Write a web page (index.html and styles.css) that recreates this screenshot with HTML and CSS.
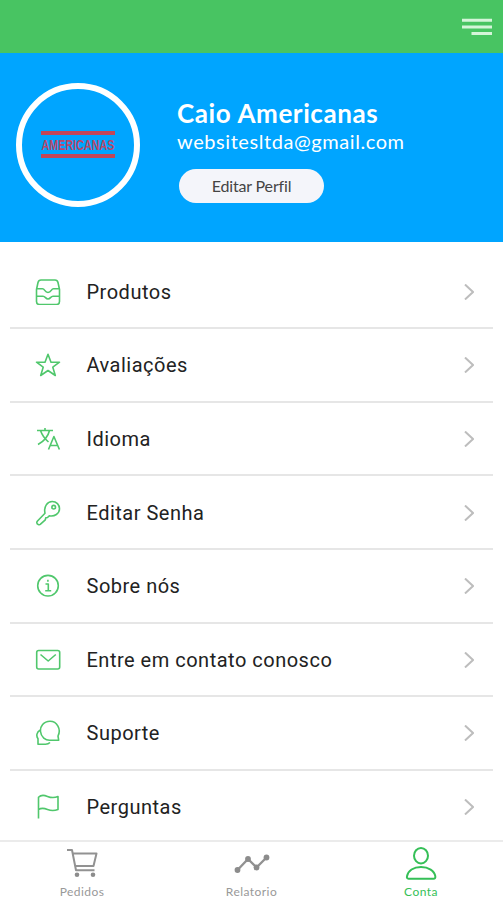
FILE: index.html
```
<!DOCTYPE html>
<html lang="pt-BR">
	<head>
		<meta charset="utf-8">
		<title>Conta</title>
		<link rel="stylesheet" href="styles.css">
	</head>
	<body>
		<div class="topbar">
			<svg class="menu-btn" width="30" height="18" viewBox="0 0 30 18">
				<path d="M0 2.300h30M0 8.900h30M9.500 15.500h20.500"/>
			</svg>
		</div>
		<div class="profile">
			<div class="avatar">
				<svg class="brand" width="104" height="40" viewBox="-15 -6 104 40">
					<path d="M0 2h74M0 25h74"/>
					<text x="0.500" y="19" textLength="73" lengthAdjust="spacingAndGlyphs">AMERICANAS</text>
				</svg>
			</div>
			<div class="info">
				<h1>Caio Americanas</h1>
				<p>websitesltda@gmail.com</p>
				<a class="edit" href="javascript:;">Editar Perfil</a>
			</div>
		</div>
		<ul class="list">
			<li>
				<svg class="icon" viewBox="0 0 26 26"><path d="M1.500 10.500L3 3.500Q3.600 1 6 1H20Q22.400 1 23 3.500L24.500 10.500V22.500Q24.500 25.500 21.500 25.500H4.500Q1.500 25.500 1.500 22.500ZM2 9.800H7.500C10 9.800 9.500 13.500 13 13.500S16 9.800 18.500 9.800H24M2 17.300H8C10.500 17.300 10.500 20 13 20S15.500 17.300 18 17.300H24"/></svg>
				<span>Produtos</span>
				<svg class="arrow" viewBox="0 0 10 16"><path d="M1 0.500l8 7.500-8 7.500"/></svg>
			</li>
			<li>
				<svg class="icon" viewBox="0 0 26 26"><path d="M13 2.300L16 10.200H24.500L17.800 15.200L20.300 23.500L13 18.500L5.700 23.500L8.200 15.200L1.500 10.200H10Z"/></svg>
				<span>Avaliações</span>
				<svg class="arrow" viewBox="0 0 10 16"><path d="M1 0.500l8 7.500-8 7.500"/></svg>
			</li>
			<li>
				<svg class="icon" viewBox="0 0 26 26"><path d="M2 4.500H18M10 2V4.500M14.500 4.500C13 11 8.500 15.500 3 18.500M5.500 4.500C7 9 10 13 13.500 16M13.500 23.500L18.900 10.500L24.400 23.500M15.200 19.500H22.700"/></svg>
				<span>Idioma</span>
				<svg class="arrow" viewBox="0 0 10 16"><path d="M1 0.500l8 7.500-8 7.500"/></svg>
			</li>
			<li>
				<svg class="icon" viewBox="0 0 26 26"><path d="M10 13.300C8.500 6.500 12.500 1.500 17.200 1.500C21.500 1.500 24.500 4.800 24.500 8.800C24.500 13.500 19.500 17 14.300 15.800L12.500 17.500L10.800 17.800L10.300 19.800L5.500 24.200C4.500 25.200 1.600 24.600 1.800 22.200L2.500 21Z"/><circle cx="18.700" cy="7.200" r="1.800"/></svg>
				<span>Editar Senha</span>
				<svg class="arrow" viewBox="0 0 10 16"><path d="M1 0.500l8 7.500-8 7.500"/></svg>
			</li>
			<li>
				<svg class="icon" viewBox="0 0 26 26"><circle cx="13" cy="12.700" r="10.300"/><path d="M10.500 11H13.300V17.400M10.200 17.700H16.200M12.900 6.700V8.700"/></svg>
				<span>Sobre nós</span>
				<svg class="arrow" viewBox="0 0 10 16"><path d="M1 0.500l8 7.500-8 7.500"/></svg>
			</li>
			<li>
				<svg class="icon" viewBox="0 0 26 26"><rect x="1.700" y="3.500" width="23" height="18.500" rx="2"/><path d="M5.500 7.500L13.200 14L20.800 7.500"/></svg>
				<span>Entre em contato conosco</span>
				<svg class="arrow" viewBox="0 0 10 16"><path d="M1 0.500l8 7.500-8 7.500"/></svg>
			</li>
			<li>
				<svg class="icon" viewBox="0 0 26 26"><path d="M23 16C26.500 9 22 1.300 15 1.300C8.500 1.300 5 6.500 5.500 11.500C6 17 10.500 20.500 15 20.300H23.700ZM5.300 10C1.500 12 1 16 3 18.800V24.200H10.500C12.500 24.200 14 23.500 15 22.500"/></svg>
				<span>Suporte</span>
				<svg class="arrow" viewBox="0 0 10 16"><path d="M1 0.500l8 7.500-8 7.500"/></svg>
			</li>
			<li>
				<svg class="icon" viewBox="0 0 26 26"><path d="M3.500 24.500V3.200C5.500 1.200 9 1 12.500 2.400C16 3.900 19.500 3.900 23 2.600V15.400C19.500 16.800 16 16.800 12.500 15.400C9 14.100 5.500 14.200 3.500 15.700"/></svg>
				<span>Perguntas</span>
				<svg class="arrow" viewBox="0 0 10 16"><path d="M1 0.500l8 7.500-8 7.500"/></svg>
			</li>
		</ul>
		<div class="tabbar">
			<a class="tab" href="javascript:;">
				<svg width="32" height="34" viewBox="0 0 32 34"><path d="M1 4H6L10 24.300H28.500M7 7.500H30.500L27.500 20H9.200"/><circle class="dot" cx="11" cy="28.800" r="2.300"/><circle class="dot" cx="27" cy="28.800" r="2.300"/></svg>
				<span>Pedidos</span>
			</a>
			<a class="tab" href="javascript:;">
				<svg width="36" height="34" viewBox="0 0 36 34"><path class="line" d="M3.500 24L14 13L22.500 21.500L32.500 11.500"/><circle class="dot" cx="3.500" cy="24" r="2.900"/><circle class="dot" cx="14" cy="13" r="2.900"/><circle class="dot" cx="22.500" cy="21.500" r="2.900"/><circle class="dot" cx="32.500" cy="11.500" r="2.900"/></svg>
				<span>Relatorio</span>
			</a>
			<a class="tab current" href="javascript:;">
				<svg width="32" height="34" viewBox="0 0 32 34"><ellipse cx="16" cy="9.700" rx="7" ry="7.700"/><path d="M3.500 32.700Q1.500 32.700 2 30.200C3 24.700 8.500 21 16 21S29.500 24.700 30.300 30.200Q30.700 32.700 28.500 32.700Z"/></svg>
				<span>Conta</span>
			</a>
		</div>
	</body>
</html>
```
FILE: styles.css
```
* {
  padding: 0;
  margin: 0;
  list-style: none;
  box-sizing: border-box;
}

body {
  height: 900px;
  display: flex;
  flex-direction: column;
  overflow: hidden;
  background: #fff;
  font-family: Roboto, sans-serif;
}

a {
  text-decoration: none;
}

svg {
  display: block;
  fill: none;
  flex: none;
}

.topbar {
  height: 53px;
  flex: none;
  padding: 18px 11px 0 0;
  display: flex;
  justify-content: flex-end;
  background: #48c462;
}

.menu-btn {
  stroke: #d4f5d9;
  stroke-width: 3;
}

.profile {
  height: 189px;
  flex: none;
  padding: 30px 16px;
  display: flex;
  background: #00a5ff;
}

.avatar {
  width: 124px;
  height: 124px;
  flex: none;
  display: flex;
  align-items: center;
  justify-content: center;
  border: 6px solid #fff;
  border-radius: 50%;
}

.brand {
  overflow: visible;
  stroke: #c34658;
  stroke-width: 4;
}

.brand text {
  fill: #b8486a;
  stroke: none;
  font-family: "Liberation Sans", sans-serif;
  font-size: 15.5px;
  font-weight: bold;
}

.info {
  padding: 15px 0 0 37px;
  color: #fff;
  font-family: Lato, sans-serif;
}

.info h1 {
  font-size: 26px;
  line-height: 30px;
  letter-spacing: 0.6px;
  white-space: nowrap;
}

.info p {
  font-size: 20px;
  line-height: 26px;
  letter-spacing: 0.57px;
}

.edit {
  width: 145px;
  height: 34px;
  margin: 15px 0 0 2px;
  display: block;
  border-radius: 17px;
  background: #f4f5fa;
  color: #444;
  font-size: 16px;
  line-height: 34px;
  letter-spacing: -0.15px;
  text-align: center;
}

.list {
  flex: 1;
  min-height: 0;
  padding: 13.6px 10px 0;
  overflow: hidden;
}

.list li {
  height: 73.6px;
  padding: 1px 19px 0 25px;
  display: flex;
  align-items: center;
  border-bottom: 2px solid #e6e6e6;
}

.list li:last-child {
  border-bottom-color: transparent;
}

.icon {
  width: 26px;
  height: 26px;
  stroke: #50c76c;
  stroke-width: 1.6;
  stroke-linejoin: round;
}

.list span {
  flex: 1;
  padding-left: 25.5px;
  color: #222;
  font-size: 20px;
  letter-spacing: 0.5px;
}

.arrow {
  width: 10px;
  height: 16px;
  stroke: #bdbdbd;
  stroke-width: 2;
}

.tabbar {
  height: 60px;
  flex: none;
  padding: 4px 0 0;
  display: flex;
  justify-content: space-between;
  border-top: 2px solid #ebebeb;
}

.tab {
  width: 164px;
  display: flex;
  flex-direction: column;
  align-items: center;
  color: #999;
  font-family: Lato, sans-serif;
  font-size: 12px;
  line-height: 16px;
  letter-spacing: 0.45px;
}

.tab span {
  padding-top: 4px;
}

.tab svg {
  stroke: #929292;
  stroke-width: 2;
  stroke-linejoin: round;
}

.tab .line {
  stroke-width: 2.4;
}

.tab .dot {
  fill: #8c8c8c;
  stroke: none;
}

.tab.current {
  color: #35bf57;
}

.tab.current svg {
  stroke: #35bf57;
}
```
